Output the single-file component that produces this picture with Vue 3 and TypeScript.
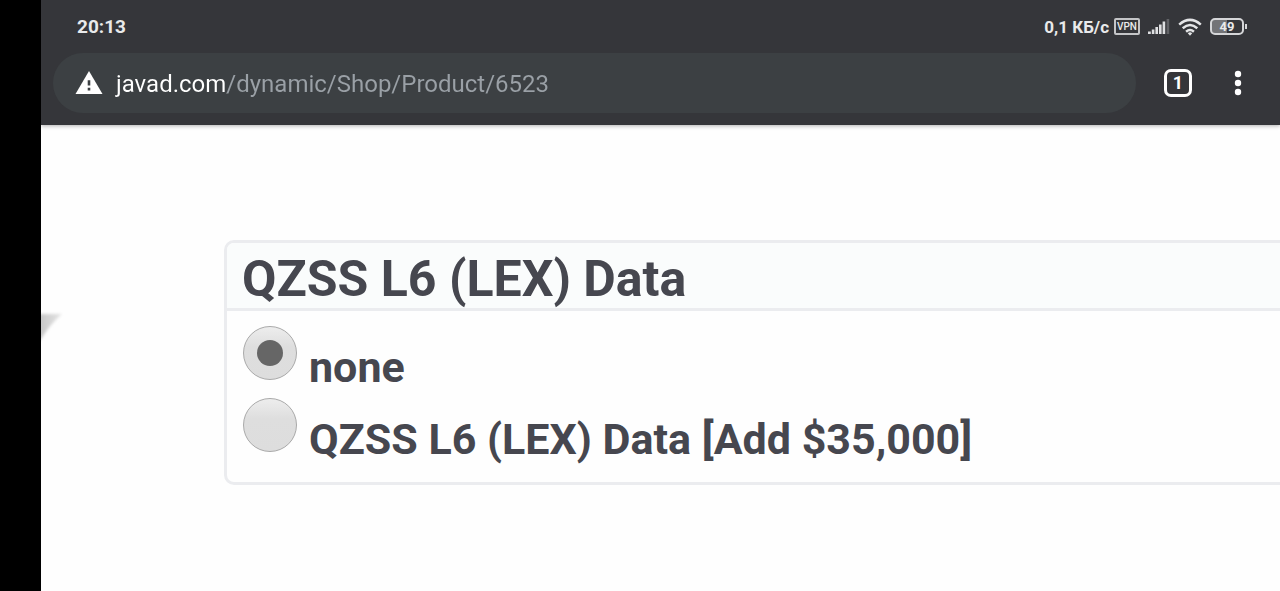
<script setup lang="ts">
import { ref } from 'vue'

interface Option {
  value: string
  label: string
}

const options: Option[] = [
  { value: 'none', label: 'none' },
  { value: 'lex', label: 'QZSS L6 (LEX) Data [Add $35,000]' },
]

const selected = ref<string>('none')
const url = ref<string>('javad.com/dynamic/Shop/Product/6523')
</script>

<template>
  <div class="device">
    <div class="screen">
      <header class="chrome">
        <div class="status">
          <time class="clock">20:13</time>
          <div class="indicators">
            <span class="speed">0,1 КБ/с</span>
            <span class="vpn">VPN</span>
            <svg class="signal" width="22" height="17" viewBox="0 0 22 17" aria-hidden="true">
              <g fill="#dfe0e2">
                <rect x="0" y="13.500" width="2.800" height="2.500" />
                <rect x="3.800" y="11.500" width="2.600" height="4.500" />
                <rect x="7.400" y="9" width="2.600" height="7" />
                <rect x="11" y="6.500" width="2.600" height="9.500" />
                <rect x="14.600" y="3.500" width="2.600" height="12.500" />
              </g>
              <rect x="18.600" y="1" width="2.600" height="15" fill="#626367" />
            </svg>
            <svg class="wifi" width="24" height="18" viewBox="0 0 24 18" aria-hidden="true">
              <g fill="none" stroke="#e4e5e7" stroke-width="2.500">
                <path d="M1.200 6.600Q12-2.800 22.800 6.600" />
                <path d="M4.700 10.300Q12 3.700 19.300 10.300" />
                <path d="M8.100 13.700Q12 10.200 15.900 13.700" />
              </g>
              <path d="M9.800 15.200Q12 13.400 14.200 15.200L12 17.800Z" fill="#e4e5e7" />
            </svg>
            <span class="battery"><span class="level">49</span></span>
          </div>
        </div>
        <div class="toolbar">
          <div class="omnibox">
            <svg class="warning" width="28" height="24" viewBox="0 0 28 24" aria-hidden="true">
              <path d="M14 0L27.500 23H0.500Z" fill="#fff" />
              <path d="M12.700 9.200h2.600v5.300h-2.600zM12.700 16.800h2.600v2.700h-2.600z" fill="#3c4043" />
            </svg>
            <input v-model="url" class="url" type="text" aria-label="Address" spellcheck="false" />
          </div>
          <button class="tabs" type="button" aria-label="Open tabs">1</button>
          <button class="menu" type="button" aria-label="Menu">
            <svg width="8" height="26" viewBox="0 0 8 26" aria-hidden="true">
              <g fill="#fff">
                <circle cx="4" cy="4" r="3.200" />
                <circle cx="4" cy="13" r="3.200" />
                <circle cx="4" cy="22" r="3.200" />
              </g>
            </svg>
          </button>
        </div>
      </header>
      <main class="page">
        <svg class="shade" width="30" height="44" viewBox="0 0 30 44" aria-hidden="true">
          <defs>
            <linearGradient id="shadeFill" gradientUnits="userSpaceOnUse" x1="0" y1="0" x2="22" y2="0">
              <stop offset="0" stop-color="#c9c9c9" />
              <stop offset="1" stop-color="#e6e6e6" />
            </linearGradient>
            <filter id="soften"><feGaussianBlur stdDeviation="1.500" /></filter>
          </defs>
          <path d="M-6 6H21Q10 15 0 31L-6 38Z" fill="url(#shadeFill)" filter="url(#soften)" />
        </svg>
        <section class="card">
          <h2 class="title">QZSS L6 (LEX) Data</h2>
          <div class="options" role="radiogroup" aria-label="QZSS L6 (LEX) Data">
            <label v-for="o in options" :key="o.value" class="option">
              <input v-model="selected" class="radio" type="radio" name="lex" :value="o.value" />
              <span class="text">{{ o.label }}</span>
            </label>
          </div>
        </section>
      </main>
    </div>
  </div>
</template>

<style>
body {
  margin: 0;
}
</style>

<style scoped>
.device {
  box-sizing: border-box;
  min-height: 100vh;
  padding-left: 41px;
  background: #000;
  font-family: Roboto, "Liberation Sans", sans-serif;
  display: flex;
  overflow: hidden;
}
.screen {
  flex: 1;
  min-width: 0;
  display: flex;
  flex-direction: column;
  background: #fefefe;
}
.chrome {
  background: #35363a;
  padding-bottom: 12px;
  box-shadow: 0 1px 4px rgba(0, 0, 0, 0.3);
  position: relative;
}
.status {
  height: 53px;
  padding: 0 33px 0 36px;
  display: flex;
  align-items: center;
  justify-content: space-between;
  color: #e9eaeb;
}
.clock {
  font-size: 19px;
  font-weight: 700;
}
.indicators {
  display: flex;
  align-items: center;
}
.speed {
  font-size: 17px;
  font-weight: 700;
}
.vpn {
  box-sizing: border-box;
  width: 26px;
  height: 17px;
  margin-left: 5px;
  border: 2px solid #c4c5c7;
  border-radius: 2px;
  font-size: 10px;
  font-weight: 500;
  line-height: 14px;
  text-align: center;
}
.signal {
  margin-left: 8px;
}
.wifi {
  margin-left: 8px;
}
.battery {
  box-sizing: border-box;
  width: 34px;
  height: 17px;
  margin-left: 8px;
  margin-right: 3px;
  border: 2px solid #d5d6d8;
  border-radius: 5px;
  background: linear-gradient(90deg, #737477 49%, #35363a 49%);
  display: flex;
  align-items: center;
  justify-content: center;
  position: relative;
}
.battery::after {
  content: "";
  position: absolute;
  right: -5px;
  top: 4px;
  width: 2px;
  height: 5px;
  background: #d5d6d8;
}
.level {
  font-size: 13px;
  font-weight: 700;
  line-height: 13px;
}
.toolbar {
  display: flex;
  align-items: center;
  padding-left: 12px;
  padding-right: 26px;
}
.omnibox {
  flex: 1;
  min-width: 0;
  height: 60px;
  margin-right: 28px;
  padding: 0 22px;
  box-sizing: border-box;
  border-radius: 30px;
  background: #3c4043;
  display: flex;
  align-items: center;
  gap: 9px;
}
.warning {
  flex: none;
}
.url {
  box-sizing: border-box;
  flex: 1;
  min-width: 0;
  height: 42px;
  padding: 2px 0 0 4px;
  border: 0;
  outline: 0;
  font: 400 24px/40px Roboto, "Liberation Sans", sans-serif;
  color: transparent;
  background: linear-gradient(90deg, #fff 115px, #9aa0a6 115px);
  -webkit-background-clip: text;
  background-clip: text;
}
.tabs {
  box-sizing: border-box;
  width: 28px;
  height: 28px;
  padding: 0;
  border: 3px solid #fff;
  border-radius: 7px;
  background: transparent;
  color: #fff;
  font: 700 18px/22px Roboto, "Liberation Sans", sans-serif;
}
.menu {
  width: 32px;
  height: 40px;
  margin-left: 30px;
  padding: 0;
  border: 0;
  background: transparent;
  display: flex;
  align-items: center;
  justify-content: center;
}
.page {
  flex: 1;
  padding: 115px 0 40px 183px;
  position: relative;
}
.shade {
  position: absolute;
  left: 0;
  top: 183px;
}
.card {
  border: 3px solid #ebecef;
  border-right: 0;
  border-radius: 10px 0 0 10px;
  color: #46474f;
  overflow: hidden;
}
.title {
  margin: 0;
  padding: 7px 15px 0;
  border-bottom: 3px solid #ebecef;
  background: #fafcfc;
  font-size: 50px;
  font-weight: 700;
  line-height: 58px;
}
.options {
  padding: 15px 16px 18px;
  display: flex;
  flex-direction: column;
  gap: 6px;
}
.option {
  display: flex;
  align-items: flex-start;
  gap: 12px;
  font-size: 43px;
  font-weight: 700;
  line-height: 50px;
}
.radio {
  appearance: none;
  flex: none;
  box-sizing: border-box;
  width: 54px;
  height: 54px;
  margin: 0;
  border: 1px solid #a9a9a9;
  border-radius: 50%;
  background: linear-gradient(#ededed, #dedede 38%, #dddddd);
  display: grid;
  place-items: center;
}
.radio:checked::before {
  content: "";
  width: 26px;
  height: 26px;
  border-radius: 50%;
  background: #666;
}
.text {
  padding-top: 16px;
}
</style>
